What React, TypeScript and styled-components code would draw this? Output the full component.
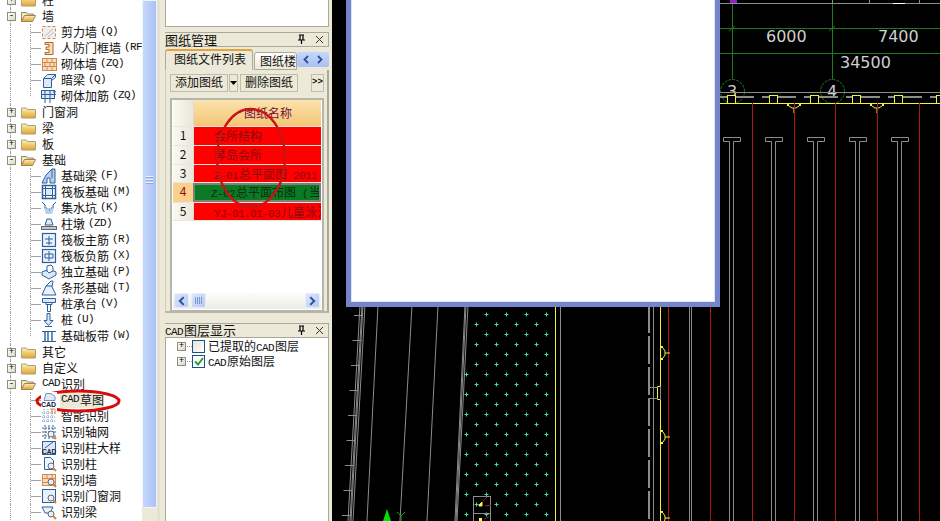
import React from "react";
import styled, { createGlobalStyle } from "styled-components";

const Global = createGlobalStyle`
  html, body { margin: 0; padding: 0; background: #ece9d8; overflow: hidden; }
  * { box-sizing: border-box; }
`;

const Page = styled.div`
  position: relative;
  width: 940px;
  height: 521px;
  display: flex;
  overflow: hidden;
  background: #ece9d8;
  font-family: "Noto Sans CJK SC", "Liberation Sans", sans-serif;
  font-size: 12px;
  color: #111;
`;

/* ---------- left tree ---------- */
const TreePanel = styled.div`
  width: 160px;
  flex: none;
  display: flex;
  height: 521px;
  border-right: 3px solid #e4e1d0;
`;
const TreeScroll = styled.div`
  width: 142px;
  flex: none;
  background: #fff;
  overflow: hidden;
`;
const TreeList = styled.div`
  margin-top: -8px;
`;
const Row = styled.div<{ $child?: boolean; $last?: boolean }>`
  position: relative;
  height: 16px;
  display: flex;
  align-items: center;
  white-space: nowrap;
  padding-left: ${(p) => (p.$child ? 41 : 6)}px;
  &::before {
    content: "";
    position: absolute;
    left: 10px;
    top: 0;
    bottom: 0;
    border-left: 1px dotted #a0a0a0;
  }
  &::after {
    content: "";
    display: ${(p) => (p.$child ? "block" : "none")};
    position: absolute;
    left: 30px;
    top: 0;
    width: 10px;
    height: ${(p) => (p.$last ? 8 : 16)}px;
    border-left: 1px dotted #a0a0a0;
    background: linear-gradient(#a0a0a0, #a0a0a0) no-repeat 0 8px / 10px 1px;
  }
`;
const Expander = styled.span`
  position: relative;
  z-index: 1;
  width: 9px;
  height: 9px;
  flex: none;
  margin-left: 1px;
  border: 1px solid #8f8f80;
  background: linear-gradient(135deg, #fff, #d8d5c6);
  display: flex;
  align-items: center;
  justify-content: center;
  font: 9px/7px "Liberation Mono", monospace;
  color: #000;
`;
const FolderBox = styled.span`
  position: relative;
  z-index: 1;
  display: flex;
  flex: none;
  margin: 0 6px 0 5px;
`;
const IconBox = styled.span`
  position: relative;
  z-index: 1;
  display: flex;
  flex: none;
  margin-right: 4px;
  background: #fff;
`;
const Label = styled.span<{ $selected?: boolean }>`
  display: inline-flex;
  align-items: center;
  height: 15px;
  line-height: 13px;
  padding-bottom: 2px;
  margin-left: ${(p) => (p.$selected ? -1 : 0)}px;
  padding-left: ${(p) => (p.$selected ? 1 : 0)}px;
  background: ${(p) => (p.$selected ? "#ece9d8" : "transparent")};
`;
const Mono = styled.span`
  font-family: "Liberation Mono", monospace;
  font-size: 11px;
  letter-spacing: -0.6px;
  padding-right: 1px;
  white-space: pre;
`;
const Tag = styled(Mono)`
  margin-left: 3px;
`;
const Scrollbar = styled.div`
  width: 15px;
  flex: none;
  height: 508px;
  background: linear-gradient(90deg, #c8d8fb, #b6cbf8 60%, #a9c0f2);
  border: 1px solid #eef3ff;
  border-radius: 0 0 2px 2px;
  display: flex;
  flex-direction: column;
  align-items: center;
  padding-top: 175px;
  gap: 1px;
`;
const Grip = styled.span`
  width: 7px;
  height: 1px;
  background: #eef3ff;
  box-shadow: 0 1px 0 #8ea8dc;
  margin-bottom: 1px;
`;

/* ---------- middle ---------- */
const Middle = styled.div`
  width: 172px;
  flex: none;
  display: flex;
  flex-direction: column;
  padding: 0 3px 0 5px;
`;
const TopBox = styled.div`
  height: 27px;
  flex: none;
  background: #fff;
  border: 1px solid #a8a898;
  border-top: 0;
`;
const TitleBar = styled.div<{ $top: number }>`
  margin-top: ${(p) => p.$top}px;
  height: 15px;
  flex: none;
  display: flex;
  align-items: center;
  border: 1px solid #aca899;
  border-left: 0;
  font-size: 13px;
  white-space: nowrap;
`;
const TitleText = styled.span`
  flex: 1;
  line-height: 12px;
`;
const TitleBtn = styled.span`
  width: 18px;
  display: flex;
  justify-content: center;
`;
const Tabs = styled.div`
  margin-top: 2px;
  height: 21px;
  flex: none;
  display: flex;
  align-items: flex-end;
  position: relative;
`;
const Tab = styled.div<{ $active?: boolean }>`
  height: ${(p) => (p.$active ? 21 : 18)}px;
  width: ${(p) => (p.$active ? 88 : 43)}px;
  flex: none;
  margin-left: ${(p) => (p.$active ? 0 : 1)}px;
  padding-left: ${(p) => (p.$active ? 8 : 5)}px;
  line-height: 16px;
  white-space: nowrap;
  overflow: hidden;
  border: 1px solid #aca899;
  border-bottom: ${(p) => (p.$active ? "0" : "1px solid #aca899")};
  border-top: ${(p) => (p.$active ? "2px solid #e6a33c" : "1px solid #aca899")};
  border-radius: 3px 3px 0 0;
  background: ${(p) => (p.$active ? "#ece9d8" : "linear-gradient(#fff, #ece9d8)")};
`;
const TabArrows = styled.div`
  width: 32px;
  height: 15px;
  margin-bottom: 3px;
  flex: none;
  background: linear-gradient(#c6d6fa, #a9c0f2);
  border-radius: 2px;
  display: flex;
  align-items: center;
  justify-content: space-around;
  padding: 0 2px;
`;
const TabBody = styled.div`
  height: 243px;
  flex: none;
  border-left: 1px solid #d0cdbc;
  border-right: 2px solid #a8a898;
  border-bottom: 2px solid #b8b5a5;
  display: flex;
  flex-direction: column;
  padding: 4px 3px 0 4px;
`;
const Toolbar = styled.div`
  height: 18px;
  flex: none;
  display: flex;
  gap: 2px;
`;
const ToolBtn = styled.div`
  height: 18px;
  width: 58px;
  flex: none;
  border: 1px solid #c0bdaa;
  text-align: center;
  line-height: 14px;
  font-size: 12px;
`;
const CaretBtn = styled(ToolBtn)`
  width: 9px;
  margin-left: -1px;
  display: flex;
  align-items: center;
  justify-content: center;
`;
const MoreBtn = styled(ToolBtn)`
  width: 13px;
  margin-left: auto;
  font: bold 9px/14px "Liberation Mono", monospace;
  margin-right: 0;
`;
const GridBox = styled.div`
  margin-top: 6px;
  height: 214px;
  flex: none;
  background: #fff;
  border: 2px solid #b4b6ac;
  box-shadow: inset 0 0 0 1px #fff;
  padding: 0 1px 1px 1px;
  display: flex;
  flex-direction: column;
  overflow: hidden;
`;
const GridRow = styled.div<{ $h: number }>`
  height: ${(p) => p.$h}px;
  flex: none;
  display: flex;
  width: 100%;
  border-bottom: 1px solid #e8e6d8;
`;
const Corner = styled.div<{ $current?: boolean }>`
  width: 21px;
  flex: none;
  background: ${(p) => (p.$current ? "#fbd08c" : "linear-gradient(90deg,#faf9f2,#e9e7da)")};
  color: ${(p) => (p.$current ? "#901010" : "#111")};
  text-align: center;
  font-size: 12px;
  line-height: 16px;
  border-right: 1px solid #e0ddcc;
`;
const HeadCell = styled.div`
  flex: 1;
  background: linear-gradient(#fce2ac, #f2c676);
  color: #7a0a3a;
  text-align: center;
  line-height: 25px;
  padding-left: 21px;
`;
const NameCell = styled.div<{ $current?: boolean }>`
  flex: 1;
  min-width: 0;
  overflow: hidden;
  white-space: nowrap;
  background: ${(p) => (p.$current ? "#0b7a24" : "#ff0000")};
  color: ${(p) => (p.$current ? "#0b2d10" : "#8a0a0a")};
  padding-left: ${(p) => (p.$current ? 18 : 20)}px;
  line-height: 17px;
  outline: ${(p) => (p.$current ? "2px solid #808078" : "none")};
  outline-offset: -2px;
  margin-left: ${(p) => (p.$current ? -1 : 0)}px;
`;
const Spacer = styled.div`
  flex: 1;
`;
const HScroll = styled.div`
  height: 17px;
  flex: none;
  display: flex;
  align-items: center;
  gap: 2px;
  padding: 0 1px;
  background: linear-gradient(#fefefd, #ecebe4);
`;
const ScrollBtn = styled.span<{ $end?: boolean }>`
  width: 15px;
  height: 15px;
  flex: none;
  margin-left: ${(p) => (p.$end ? "auto" : 0)};
  background: linear-gradient(135deg, #dbe6fc, #b6caf5);
  border: 1px solid #e8eefb;
  border-radius: 2px;
  display: flex;
  align-items: center;
  justify-content: center;
`;
const LayerTree = styled.div`
  flex: 1;
  background: #fff;
  border-left: 1px solid #a8a898;
  border-right: 1px solid #a8a898;
  padding-top: 1px;
`;
const LayerRow = styled.div`
  height: 15px;
  display: flex;
  align-items: center;
  padding-left: 10px;
  white-space: nowrap;
  line-height: 13px;
`;
const Stub = styled.span`
  width: 5px;
  flex: none;
  margin-left: 1px;
  border-top: 1px dotted #a0a0a0;
`;
const Check = styled.span<{ $on?: boolean }>`
  width: 13px;
  height: 13px;
  flex: none;
  margin: 0 3px 0 0;
  border: 1px solid #1c5180;
  background: ${(p) => (p.$on ? "#fff" : "linear-gradient(135deg,#e4e2d8,#fff)")};
  display: flex;
  align-items: center;
  justify-content: center;
`;

/* ---------- canvas ---------- */
const Canvas = styled.div`
  position: relative;
  flex: 1;
  background: #000;
`;
const Drawing = styled.svg`
  display: block;
  width: 608px;
  height: 521px;
`;
const Dialog = styled.div`
  position: absolute;
  left: 14px;
  top: -6px;
  width: 374px;
  height: 313px;
  background: #fff;
  border: 5px solid #7485cb;
  box-shadow: inset 0 0 0 1px #dfe4f6;
`;
const Annotations = styled.svg`
  position: absolute;
  left: 0;
  top: 0;
  width: 940px;
  height: 521px;
  pointer-events: none;
`;

/* ---------- icons ---------- */
const Folder = ({ open }: { open?: boolean }) => (
  <svg width="15" height="14" viewBox="0 0 15 14">
    <defs>
      <linearGradient id="fg" x1="0" y1="0" x2="0" y2="1">
        <stop offset="0" stopColor="#fff0b8" />
        <stop offset="1" stopColor="#e2a428" />
      </linearGradient>
    </defs>
    {open ? (
      <>
        <path d="M.5 12.5V3.5h5l1 1.5h6v2" fill="#f3e7bd" stroke="#98855a" />
        <path d="M.5 12.5l3-6h11l-3 6z" fill="url(#fg)" stroke="#98855a" />
      </>
    ) : (
      <path d="M.5 13V3h5l1 1.5h8V13z" fill="url(#fg)" stroke="#a8a080" />
    )}
  </svg>
);

const B = "#2d5f9e";
const O = "#d8894a";
const Lens = () => (
  <>
    <circle cx="10" cy="10" r="3" fill="#e8f0fb" stroke="#667" />
    <path d="M12 12l3 3" stroke="#c8883a" strokeWidth="2" />
  </>
);
const art: Record<string, React.ReactNode> = {
  shear: (
    <>
      <rect x="1.5" y="2.5" width="13" height="12" fill="#eee" stroke={O} strokeDasharray="3 2" />
      <path d="M4 12l8-7M7 13l6-5" stroke="#bbb" />
    </>
  ),
  rf: <path d="M4 2.5h8v12H4v-2h4v-3H5V7h3V4.500H4z" fill="#f6dcb8" stroke="#b2641e" />,
  brick: (
    <>
      <rect x="1.5" y="2.500" width="14" height="12" fill="#f6dcc0" stroke={O} />
      <path d="M1.500 6.500h14M1.500 10.500h14M6 2.500v4M11 2.500v4M4 6.500v4M9 6.500v4M13 6.500v4M6 10.500v4M11 10.500v4" stroke={O} />
    </>
  ),
  beam: (
    <>
      <path d="M2.500 6.500l4-4h8v3l-4 3v7h-8z" fill="#dfe9f6" stroke={B} />
      <path d="M2.500 6.500h8v8M10.500 6.500l4-4" stroke={B} fill="none" />
    </>
  ),
  rebar: (
    <>
      <rect x=".5" y="2.500" width="13" height="8" fill="#dfe9f6" stroke={B} />
      <path d="M4 2v13M9 2v13M0 6.500h15M12 4l3 0" stroke={B} />
    </>
  ),
  fbeam: <path d="M1 15l4-8 6-6h3v14H9v-5H6v5zM11 1v9" fill="#b9d0ec" stroke={B} />,
  raft: (
    <>
      <rect x="1.500" y="1.500" width="13" height="13" fill="#fff" stroke={B} strokeWidth="1.500" />
      <rect x="4.500" y="4.500" width="7" height="7" fill="#dfe9f6" stroke={B} />
      <path d="M1 4.500h14M1 11.500h14M4.500 1v14M11.500 1v14" stroke={B} />
    </>
  ),
  pit: (
    <>
      <path d="M1 2l3 3v3l2 3h4l2-3V5l3-3" fill="none" stroke={B} />
      <path d="M3 8l2 6h6l2-6z" fill="#b9d0ec" />
      <path d="M5 8h1M8 10h1M10 8h1" stroke={B} />
    </>
  ),
  pier: (
    <>
      <path d="M6 3h4l2 6H4z" fill="#dfe9f6" stroke={B} />
      <rect x="0.500" y="10.500" width="15" height="3" fill="#c9c7bb" stroke="#667" />
    </>
  ),
  rmain: (
    <>
      <rect x="1.500" y="1.500" width="13" height="13" fill="#eaf1fa" stroke={B} strokeWidth="1.200" />
      <path d="M8 4v9M4 7h8M5 11h6" stroke={B} />
    </>
  ),
  rneg: (
    <>
      <rect x="1.500" y="1.500" width="13" height="13" fill="#eaf1fa" stroke={B} strokeWidth="1.200" />
      <path d="M8 3v10M4 6h8v4H4z" stroke={B} fill="none" />
    </>
  ),
  indep: (
    <>
      <path d="M1 8l7-3 7 3-7 4z" fill="#b9d0ec" stroke={B} />
      <path d="M1 8v3l7 4 7-4V8" fill="#dfe9f6" stroke={B} />
      <path d="M6 2l4-1 2 2v4l-4 2-2-2z" fill="#fff" stroke={B} />
    </>
  ),
  strip: (
    <>
      <path d="M1 15l4-9 5-5h2l-1 6 4 8z" fill="#eaf1fa" stroke={B} />
      <path d="M5 6h6M10 1l-5 5" stroke={B} />
    </>
  ),
  cap: (
    <>
      <path d="M1.500 2.500h13v4h-13z" fill="#dfe9f6" stroke={B} />
      <path d="M5 6.500h6v2H5zM6.500 8.500h3v7h-3z" fill="#fff" stroke={B} />
    </>
  ),
  pile: (
    <>
      <path d="M6 1.500h3v7h3l-4.500 5-4.500-5h3z" fill="#dfe9f6" stroke={B} />
      <path d="M4 14.500h7" stroke={B} />
    </>
  ),
  band: (
    <>
      <path d="M1 3.500h14M1 13.500h14" stroke={B} />
      <path d="M4 3v11M7 3v11M11 3v11" stroke={B} strokeWidth="1.400" />
    </>
  ),
  cad: (
    <>
      <path d="M5 1.500h5l4 3v4H3z" fill="#dfe9f6" stroke="#7a90b8" />
      <text x="0" y="14.500" fontFamily="Liberation Sans" fontWeight="700" fontSize="7" fill="#123">CAD</text>
    </>
  ),
  smart: (
    <>
      <path d="M1 5h14M1 9h14M1 13h14M3 1v14M7 1v14M11 1v14" stroke="#7a90b8" strokeDasharray="1 1" />
      <path d="M9 1h5v5M11 1v5" stroke={O} fill="none" />
    </>
  ),
  axis: (
    <>
      <path d="M1 4h14M1 8h14M1 12h14M4 1v14M8 1v14M12 1v14" stroke={B} strokeDasharray="2 1" />
      <Lens />
    </>
  ),
  cad2: (
    <>
      <rect x="1.500" y="1.500" width="13" height="13" fill="#dfe9f6" stroke={B} />
      <path d="M4 8l8-6" stroke={B} />
      <text x="1" y="14" fontFamily="Liberation Sans" fontWeight="700" fontSize="6.500" fill="#123">CAD</text>
    </>
  ),
  fcol: (
    <>
      <path d="M3.500 1.500h6l3 3v9h-9z" fill="#f2f5fb" stroke={B} />
      <Lens />
    </>
  ),
  fwall: (
    <>
      <rect x="1.500" y="2.500" width="13" height="11" fill="#f6dcc0" stroke={O} />
      <path d="M1.500 6.500h13M1.500 10.500h13M6 2.500v4M11 2.500v4" stroke={O} />
      <Lens />
    </>
  ),
  fdoor: (
    <>
      <rect x="1.500" y="1.500" width="13" height="13" fill="#eaf1fa" stroke={B} />
      <Lens />
    </>
  ),
  fbeam2: (
    <>
      <path d="M1 3h11l-3 6H4z" fill="#eaf1fa" stroke={B} />
      <Lens />
    </>
  ),
};
const Icon = ({ name }: { name: string }) => (
  <IconBox>
    <svg width="16" height="16" viewBox="0 0 16 16">
      {art[name]}
    </svg>
  </IconBox>
);

const Pin = () => (
  <svg width="9" height="11" viewBox="0 0 9 11">
    <path d="M2 1h5M3 1v5M6 1v5M1 6h7M4.500 6v4" stroke="#000" strokeWidth="1.200" fill="none" />
  </svg>
);
const Cross = () => (
  <svg width="9" height="9" viewBox="0 0 9 9">
    <path d="M1 1l7 7M8 1L1 8" stroke="#333" />
  </svg>
);
const Chevron = ({ left, size = 6 }: { left?: boolean; size?: number }) => (
  <svg width={size} height={size + 3} viewBox="0 0 6 9">
    <path d={left ? "M5 1L1.500 4.500 5 8" : "M1 1l3.500 3.500L1 8"} stroke="#2f4f96" strokeWidth="1.800" fill="none" />
  </svg>
);

/* ---------- text helper ---------- */
const Mixed = ({ text }: { text: string }) => (
  <>
    {text.split(/([A-Za-z0-9\-.() ]+)/).map((part, i) =>
      /^[A-Za-z0-9\-.() ]+$/.test(part) ? <Mono key={i}>{part}</Mono> : <span key={i}>{part}</span>
    )}
  </>
);

/* ---------- data ---------- */
type Item = { t: string; tag?: string; icon?: string; open?: boolean; last?: boolean; sel?: boolean };
const tree: Item[] = [
  { t: "柱" },
  { t: "墙", open: true },
  { t: "剪力墙", tag: "(Q)", icon: "shear" },
  { t: "人防门框墙", tag: "(RF", icon: "rf" },
  { t: "砌体墙", tag: "(ZQ)", icon: "brick" },
  { t: "暗梁", tag: "(Q)", icon: "beam" },
  { t: "砌体加筋", tag: "(ZQ)", icon: "rebar", last: true },
  { t: "门窗洞" },
  { t: "梁" },
  { t: "板" },
  { t: "基础", open: true },
  { t: "基础梁", tag: "(F)", icon: "fbeam" },
  { t: "筏板基础", tag: "(M)", icon: "raft" },
  { t: "集水坑", tag: "(K)", icon: "pit" },
  { t: "柱墩", tag: "(ZD)", icon: "pier" },
  { t: "筏板主筋", tag: "(R)", icon: "rmain" },
  { t: "筏板负筋", tag: "(X)", icon: "rneg" },
  { t: "独立基础", tag: "(P)", icon: "indep" },
  { t: "条形基础", tag: "(T)", icon: "strip" },
  { t: "桩承台", tag: "(V)", icon: "cap" },
  { t: "桩", tag: "(U)", icon: "pile" },
  { t: "基础板带", tag: "(W)", icon: "band", last: true },
  { t: "其它" },
  { t: "自定义" },
  { t: "CAD识别", open: true },
  { t: "CAD草图", icon: "cad", sel: true },
  { t: "智能识别", icon: "smart" },
  { t: "识别轴网", icon: "axis" },
  { t: "识别柱大样", icon: "cad2" },
  { t: "识别柱", icon: "fcol" },
  { t: "识别墙", icon: "fwall" },
  { t: "识别门窗洞", icon: "fdoor" },
  { t: "识别梁", icon: "fbeam2" },
];
const drawings = [
  { n: "会所结构", h: 19 },
  { n: "琴岛会所", h: 19 },
  { n: "Z-01总平面图 2011", h: 18 },
  { n: "Z-02总平面布图 (当前图纸)", h: 20, current: true },
  { n: "YJ-01.01-03儿童泳池", h: 18 },
];

/* ---------- CAD drawing data ---------- */
const range = (n: number) => Array.from({ length: n }, (_, i) => i);
const grey = "#8c8c8c";
const red = "#b01818";
const yellow = "#f2f23a";
const cadVerticals: [number, string][] = [
  [560, grey],
  [555, yellow],
  [653, grey],
  [689, grey],
  [691, grey],
  [668, red],
  [710, red],
];
const rightReds = [752, 794, 835, 877, 919];
const tStems = [729, 771, 813, 855, 897];
const squares = [727, 769, 810, 852, 894, 936];
const slanted = [
  { a: 360, b: 348 }, { a: 362, b: 350 }, { a: 363, b: 351 }, { a: 365, b: 353 },
  { a: 378, b: 367 }, { a: 412, b: 400 }, { a: 438, b: 427 },
  { a: 465, b: 455 }, { a: 466, b: 456 }, { a: 468, b: 457 },
];
const dots = range(21).flatMap((r) => {
  const y = 314.5 + r * 10;
  const lx = 469 - ((y - 305) / 216) * 10;
  return range(6)
    .map((c) => (r % 2 === 0 ? 446 : 456) + 20 * c)
    .filter((x) => x > lx && x < 553)
    .map((x) => ({ x, y }));
});
const Arc = ({ x, y, dir }: { x: number; y: number; dir: "down" | "right" }) => (
  <g transform={`translate(${x} ${y}) rotate(${dir === "down" ? 0 : -90})`} stroke={yellow} fill="none">
    <path d="M-7 -1l2 2 3 2h4l3-2 2-2M-7 1l2-2M7 1l-2-2M0 3v5" />
  </g>
);

export default function App() {
  return (
    <Page>
      <Global />
      <TreePanel>
        <TreeScroll>
          <TreeList>
            {tree.map((it, i) => (
              <Row key={i} $child={!!it.icon} $last={it.last}>
                {it.icon ? (
                  <Icon name={it.icon} />
                ) : (
                  <>
                    <Expander>{it.open ? "-" : "+"}</Expander>
                    <FolderBox>
                      <Folder open={it.open} />
                    </FolderBox>
                  </>
                )}
                <Label $selected={it.sel}>
                  <Mixed text={it.t} />
                  {it.tag && <Tag>{it.tag}</Tag>}
                </Label>
              </Row>
            ))}
          </TreeList>
        </TreeScroll>
        <Scrollbar>
          <Grip />
          <Grip />
          <Grip />
        </Scrollbar>
      </TreePanel>

      <Middle>
        <TopBox />
        <TitleBar $top={5}>
          <TitleText>图纸管理</TitleText>
          <TitleBtn><Pin /></TitleBtn>
          <TitleBtn><Cross /></TitleBtn>
        </TitleBar>
        <Tabs>
          <Tab $active>图纸文件列表</Tab>
          <Tab>图纸楼层</Tab>
          <TabArrows>
            <Chevron left />
            <Chevron />
          </TabArrows>
        </Tabs>
        <TabBody>
          <Toolbar>
            <ToolBtn>添加图纸</ToolBtn>
            <CaretBtn>
              <svg width="7" height="4" viewBox="0 0 7 4"><path d="M0 0h7L3.500 4z" fill="#000" /></svg>
            </CaretBtn>
            <ToolBtn>删除图纸</ToolBtn>
            <MoreBtn>&gt;&gt;</MoreBtn>
          </Toolbar>
          <GridBox>
            <GridRow $h={27}>
              <Corner />
              <HeadCell>图纸名称</HeadCell>
            </GridRow>
            {drawings.map((d, i) => (
              <GridRow key={d.n} $h={d.h}>
                <Corner $current={d.current}>{i + 1}</Corner>
                <NameCell $current={d.current}>
                  <Mixed text={d.n} />
                </NameCell>
              </GridRow>
            ))}
            <Spacer />
            <HScroll>
              <ScrollBtn><Chevron left size={7} /></ScrollBtn>
              <ScrollBtn>
                <svg width="7" height="7" viewBox="0 0 7 7"><path d="M.5 0v7M2.500 0v7M4.500 0v7M6.500 0v7" stroke="#7d96cc" /></svg>
              </ScrollBtn>
              <ScrollBtn $end><Chevron size={7} /></ScrollBtn>
            </HScroll>
          </GridBox>
        </TabBody>
        <TitleBar $top={10}>
          <TitleText>
            <Mixed text="CAD" />图层显示
          </TitleText>
          <TitleBtn><Pin /></TitleBtn>
          <TitleBtn><Cross /></TitleBtn>
        </TitleBar>
        <LayerTree>
          <LayerRow>
            <Expander>+</Expander>
            <Stub />
            <Check />
            <span>已提取的<Mono>CAD</Mono>图层</span>
          </LayerRow>
          <LayerRow>
            <Expander>+</Expander>
            <Stub />
            <Check $on>
              <svg width="10" height="9" viewBox="0 0 10 9"><path d="M1 4.500l3 3L9 1" stroke="#2a9a3a" strokeWidth="2" fill="none" /></svg>
            </Check>
            <span><Mono>CAD</Mono>原始图层</span>
          </LayerRow>
        </LayerTree>
      </Middle>

      <Canvas>
        <Drawing viewBox="332 0 608 521">
          {/* top of the plan */}
          <path d="M720 3.500h220" stroke={grey} />
          <rect x="730" y="0" width="7" height="3" fill="#9020c0" />
          <path d="M832.500 0v3M869.500 0v3M919.500 0v3" stroke={grey} />
          <path d="M893 3.500h12" stroke="#fff" />
          <path d="M732.500 4v75M832.500 4v75M720 28.500h220M720 53.500h220" stroke="#1e7a1e" />
          <path d="M729 31l6-5M829 31l6-5" stroke="#1e7a1e" />
          <circle cx="732.500" cy="91.500" r="12" fill="none" stroke="#1e7a1e" strokeDasharray="3 1" />
          <circle cx="832.500" cy="91.500" r="12" fill="none" stroke="#1e7a1e" strokeDasharray="3 1" />
          <g fontFamily="DejaVu Sans" fontSize="16" fill="#cfcfcf">
            <text x="766" y="42">6000</text>
            <text x="878" y="42">7400</text>
            <text x="840" y="68">34500</text>
            <text x="727" y="97">3</text>
            <text x="827" y="97">4</text>
          </g>
          <path d="M720 92.500h220" stroke={grey} />
          <path d="M720 97h220" stroke={grey} strokeWidth="2" strokeDasharray="34 8" />
          {squares.map((x) => (
            <rect key={x} x={x + 0.5} y="95.500" width="8" height="8" fill="#000" stroke={yellow} />
          ))}
          <path d="M720 103.500h220" stroke={yellow} />
          <Arc x={794} y={105} dir="down" />
          <Arc x={877} y={105} dir="down" />
          {rightReds.map((x) => (
            <path key={x} d={`M${x + 0.5} 103v418`} stroke={red} />
          ))}
          {tStems.map((x) => (
            <path key={x} d={`M${x + 0.5} 521V141.500h-6v-4h17v4h-7V521`} fill="none" stroke={grey} />
          ))}
          {/* left of the plan */}
          {cadVerticals.map(([x, c]) => (
            <path key={`${x}${c}`} d={`M${x + 0.5} 305v216`} stroke={c} />
          ))}
          <path d="M649 305v216" stroke={grey} strokeWidth="2" strokeDasharray="28 3" />
          <path d="M660.500 305v81.500h-3v13h3V521" stroke={yellow} fill="none" />
          {slanted.map((s, i) => (
            <path key={i} d={`M${s.a} 305L${s.b} 521`} stroke={grey} />
          ))}
          {range(9).map((i) => {
            const x = 354 - i * 1.5;
            return <path key={i} d={`M${x} ${315.500 + i * 25}h9`} stroke={grey} />;
          })}
          {dots.map((d, i) => (
            <path key={i} d={`M${d.x - 1.5} ${d.y}h4M${d.x + 0.5} ${d.y - 2}v4`} stroke="#3fe0a8" />
          ))}
          {/* wall details */}
          <path d="M649 387.500h9M649 398.500h9M660.500 387v13" stroke={grey} />
          <Arc x={662} y={353} dir="right" />
          <Arc x={662} y={437} dir="right" />
          <Arc x={662} y={518} dir="right" />
          {/* bottom markers */}
          <path d="M387 509l4 12h-8z" fill="#00e000" />
          <path d="M397 512l4 4 4-4M401 516v5" stroke="#1e9a1e" fill="none" />
          <rect x="473.500" y="496.500" width="17" height="17" fill="none" stroke={grey} />
          <rect x="473.500" y="513.500" width="17" height="10" fill="none" stroke={grey} />
          <path d="M479 505l3-3v4h-3z" fill={yellow} stroke={yellow} />
          <path d="M483 501l4-4M485 505.500h6M484 519l5-2" stroke={red} />
          <rect x="479" y="518" width="3" height="3" fill={yellow} />
        </Drawing>
        <Dialog />
      </Canvas>

      <Annotations viewBox="0 0 940 521">
        <ellipse cx="251" cy="158" rx="34" ry="49" fill="none" stroke="#c81414" strokeWidth="2.500" />
        <ellipse cx="78" cy="401" rx="41" ry="10" fill="none" stroke="#d80c0c" strokeWidth="3" />
      </Annotations>
    </Page>
  );
}
